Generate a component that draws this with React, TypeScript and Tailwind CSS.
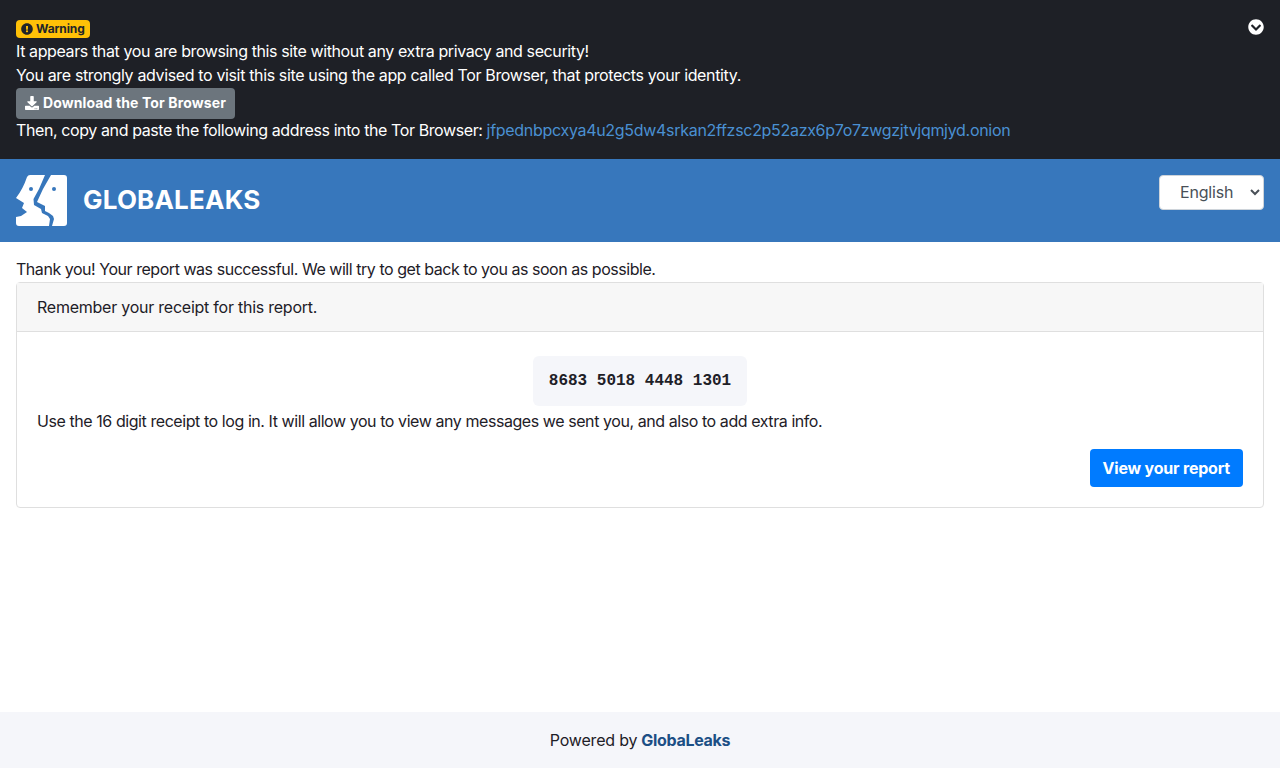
import { FaDownload, FaExclamationCircle, FaChevronCircleDown } from "react-icons/fa";

function Logo() {
  return (
    <svg width="51" height="51" viewBox="0 0 51 51" fill="white" className="shrink-0">
      <path d="M11 2 Q12 0 14 0 H29 L23 14 L17.5 24 L18 30 L25 34 L26 38 L32 41 L34 44 L33 51 H3 Q0 51 0 48 V42 L5 41 L11 37 L6 33 L8 28 L0 23 Q7 14 11 2 Z" />
      <path d="M35 0 H48 Q51 0 51 3 V48 Q51 51 48 51 H36 L38 44 L37 41 L33 38 L29 36 L29 31 L21 27 L27 14 Z" />
      <circle cx="15" cy="14" r="2" fill="#3777bc" />
      <circle cx="38" cy="14" r="2" fill="#3777bc" />
    </svg>
  );
}

export default function App() {
  return (
    <div className="min-h-screen flex flex-col bg-white text-[#1e2027] text-base font-['Inter','Liberation_Sans',sans-serif]">
      <div className="bg-[#1e2026] text-white px-4 pt-5 h-[159px] relative leading-6">
        <FaChevronCircleDown className="absolute right-4 top-[19px] text-white" size={16} />
        <div className="h-[18px] mb-[1px] flex">
          <span className="inline-flex items-center gap-[3px] bg-[#ffc107] text-[#212529] text-xs font-bold rounded px-[5px] tracking-[-0.12px]">
            <FaExclamationCircle size={12} />
            Warning
          </span>
        </div>
        <div className="tracking-[-0.39px]">It appears that you are browsing this site without any extra privacy and security!</div>
        <div className="tracking-[-0.36px]">You are strongly advised to visit this site using the app called Tor Browser, that protects your identity.</div>
        <button className="mt-px flex items-center gap-1 bg-[#6c757d] text-white text-sm font-bold rounded h-[31px] px-[9px] pb-px border-0 tracking-[0.12px]">
          <FaDownload size={14} />
          Download the Tor Browser
        </button>
        <div className="-mt-px tracking-[-0.4px]">
          Then, copy and paste the following address into the Tor Browser:{" "}
          <a href="#" className="text-[#4a90d2] tracking-[-0.3px]">jfpednbpcxya4u2g5dw4srkan2ffzsc2p52azx6p7o7zwgzjtvjqmjyd.onion</a>
        </div>
      </div>

      <header className="bg-[#3777bc] h-[83px] px-4 pt-4 flex justify-between items-start">
        <div className="flex items-center gap-4">
          <Logo />
          <span className="text-white text-[26px] font-bold tracking-[0.2px] -mt-[2px]">GLOBALEAKS</span>
        </div>
        <select className="w-[105px] h-[35px] bg-white rounded border border-[#ced4da] text-[#495057] pl-4 pb-[2px] text-base tracking-[-0.2px]">
          <option>English</option>
        </select>
      </header>

      <main className="flex-1 px-4 pt-4">
        <div className="leading-6 h-6 -translate-y-px tracking-[-0.46px]">Thank you! Your report was successful. We will try to get back to you as soon as possible.</div>
        <div className="border border-[#dfdfdf] rounded">
          <div className="bg-[#f7f7f7] border-b border-[#dfdfdf] h-[49px] px-5 flex items-center tracking-[-0.24px]">Remember your receipt for this report.</div>
          <div className="p-5">
            <div className="flex justify-center pt-1">
              <div className="bg-[#f5f6fa] rounded-md h-[50px] px-4 flex items-center font-['Liberation_Mono',monospace] font-bold">
                8683 5018 4448 1301
              </div>
            </div>
            <div className="leading-6 mt-[3px] tracking-[-0.43px]">Use the 16 digit receipt to log in. It will allow you to view any messages we sent you, and also to add extra info.</div>
            <div className="flex justify-end mt-[16px]">
              <button className="bg-[#007bff] text-white text-base font-bold rounded h-[38px] px-[13px] tracking-[-0.2px]">View your report</button>
            </div>
          </div>
        </div>
      </main>

      <footer className="bg-[#f5f6fa] h-14 flex items-center justify-center gap-1 pb-px tracking-[-0.2px]">
        Powered by <a href="#" className="font-bold text-[#1c4f85] tracking-[-0.3px]">GlobaLeaks</a>
      </footer>
    </div>
  );
}
